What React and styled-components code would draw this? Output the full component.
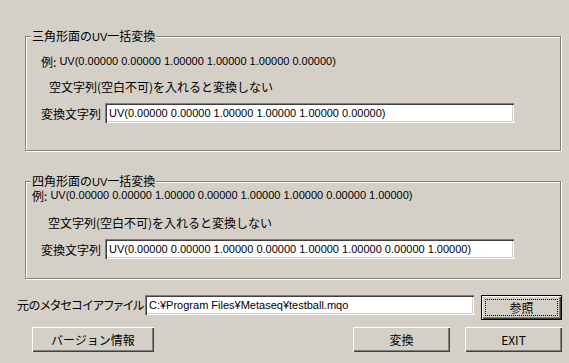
import React from "react";
import styled, { createGlobalStyle } from "styled-components";

const GlobalStyle = createGlobalStyle`
  html, body {
    margin: 0;
    padding: 0;
    background: #d4d0c8;
  }
  body {
    font-family: "Noto Sans CJK JP", sans-serif;
    font-size: 12px;
    color: #000;
  }
`;

const Window = styled.div`
  width: 569px;
  height: 363px;
  box-sizing: border-box;
  padding: 36px 7px 0 17px;
  display: flex;
  flex-direction: column;
  background: #d4d0c8;
`;

const Group = styled.div`
  position: relative;
  box-sizing: border-box;
  height: ${({ $h }) => $h}px;
  margin: ${({ $mt }) => $mt || 0}px 1px 0 8px;
  padding-top: ${({ $pt }) => $pt}px;
  border: 1px solid #808080;
  box-shadow: inset 1px 1px 0 #fff, 1px 1px 0 #fff;
  display: flex;
  flex-direction: column;
`;

const Legend = styled.div`
  position: absolute;
  top: -7px;
  left: 5px;
  padding: 0 1px;
  line-height: 12px;
  background: #d4d0c8;
  white-space: nowrap;
`;

const Row = styled.div`
  display: flex;
  align-items: center;
  height: ${({ $h }) => $h || 13}px;
  line-height: 13px;
  margin-top: ${({ $mt }) => $mt}px;
  padding-left: ${({ $left }) => $left}px;
  white-space: nowrap;
`;

const Latin = styled.span`
  font-family: "Liberation Sans", Arial, sans-serif;
  font-size: 11px;
`;

const Label = styled.span`
  width: ${({ $w }) => $w}px;
  flex: none;
  white-space: nowrap;
`;

const Field = styled.input`
  box-sizing: border-box;
  width: ${({ $w }) => $w}px;
  height: 20px;
  margin: 0;
  padding: 0 0 0 4px;
  border: none;
  outline: none;
  background: #fff;
  font-family: "Liberation Sans", Arial, sans-serif;
  font-size: 11px;
  color: #000;
  box-shadow: inset 1px 1px 0 #808080, inset 2px 2px 0 #404040,
    inset -1px -1px 0 #fff, inset -2px -2px 0 #d4d0c8;
`;

const FileRow = styled.div`
  display: flex;
  align-items: flex-start;
  margin-top: 16px;
`;

const FileLabel = styled.span`
  width: 128px;
  flex: none;
  line-height: 20px;
  white-space: nowrap;
  font-feature-settings: "palt";
  letter-spacing: -0.3px;
`;

const Button = styled.button`
  position: relative;
  box-sizing: border-box;
  width: ${({ $w }) => $w}px;
  height: 25px;
  margin: 0 0 0 ${({ $ml }) => $ml || 0}px;
  padding: 0;
  background: #d4d0c8;
  font-family: "Noto Sans CJK JP", sans-serif;
  font-size: 12px;
  color: #000;
  border: ${({ $default }) => ($default ? "1px solid #000" : "none")};
  box-shadow: inset 1px 1px 0 #fff, inset -1px -1px 0 #404040,
    inset -2px -2px 0 #808080;
  &::after {
    content: "";
    display: ${({ $default }) => ($default ? "block" : "none")};
    position: absolute;
    inset: 3px;
    border: 1px dotted #000;
  }
`;

const ButtonRow = styled.div`
  display: flex;
  margin-top: 7px;
`;

const Spacer = styled.div`
  flex: 1;
`;

const triValue = "UV(0.00000 0.00000 1.00000 1.00000 1.00000 0.00000)";
const quadValue =
  "UV(0.00000 0.00000 1.00000 0.00000 1.00000 1.00000 0.00000 1.00000)";

const ConvertGroup = ({ title, value, h, mt, pt, rows }) => (
  <Group $h={h} $mt={mt} $pt={pt}>
    <Legend>
      {title[0]}
      <Latin>UV</Latin>
      {title[1]}
    </Legend>
    <Row $mt={rows[0].mt} $left={rows[0].left}>
      例: <Latin>&nbsp;{value}</Latin>
    </Row>
    <Row $mt={rows[1].mt} $left={rows[1].left}>
      空文字列(空白不可)を入れると変換しない
    </Row>
    <Row $mt={rows[2].mt} $left={rows[2].left} $h={20}>
      <Label $w={64}>変換文字列</Label>
      <Field $w={409} defaultValue={value} readOnly />
    </Row>
  </Group>
);

export default function App() {
  return (
    <>
      <GlobalStyle />
      <Window>
        <ConvertGroup
          title={["三角形面の", "一括変換"]}
          value={triValue}
          h={115}
          pt={18}
          rows={[
            { mt: 0, left: 15 },
            { mt: 12, left: 23 },
            { mt: 10, left: 15 },
          ]}
        />
        <ConvertGroup
          title={["四角形面の", "一括変換"]}
          value={quadValue}
          h={98}
          mt={30}
          pt={7}
          rows={[
            { mt: 0, left: 6 },
            { mt: 14, left: 22 },
            { mt: 10, left: 15 },
          ]}
        />
        <FileRow>
          <FileLabel>元のメタセコイアファイル</FileLabel>
          <Field
            $w={329}
            defaultValue="C:¥Program Files¥Metaseq¥testball.mqo"
            readOnly
          />
          <Spacer />
          <Button $w={81} $default>
            参照
          </Button>
        </FileRow>
        <ButtonRow>
          <Button $w={122} $ml={15}>
            バージョン情報
          </Button>
          <Spacer />
          <Button $w={97}>変換</Button>
          <Button $w={97} $ml={15}>
            EXIT
          </Button>
        </ButtonRow>
      </Window>
    </>
  );
}
